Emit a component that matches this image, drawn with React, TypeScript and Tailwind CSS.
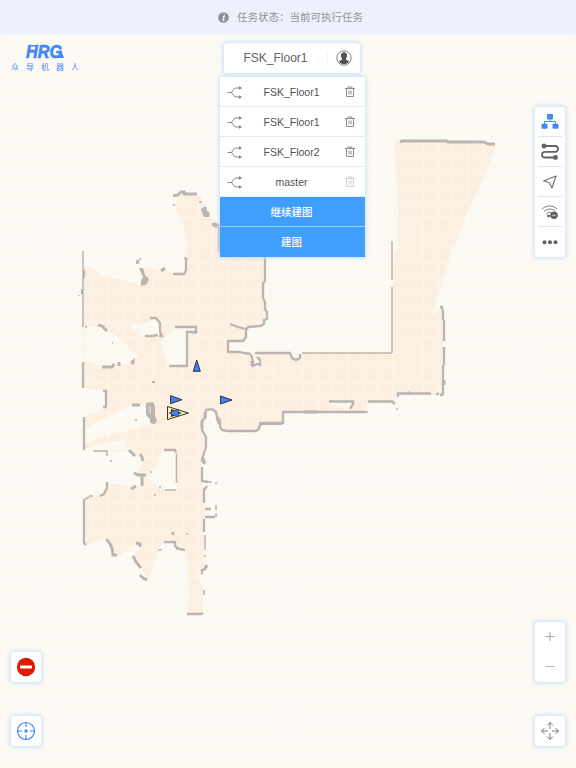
import React from "react";

const sans = "font-['Liberation_Sans','Noto_Sans_CJK_SC',sans-serif]";
const card = "rounded-[3px] bg-white shadow-[0_0_4px_1px_#c3dff8]";

const FLOOR =
  "M178 196L200 195L204 203L208 214L214 220L219 226V250H265V284L264 298L267 312L264 322L262 326L247 327L246 338L242 341H228V352L240 353L252 354L290 353L293 358H299L302 353H392V282L394 253L398 250V200L396 175L394 142L450 143L496 145L486 172L463 223L450 255L438 295L431 317L441 308H443V395H398L395 401H368L363 411L354 412H283V423H262L258 430L225 431L220 427L217 417L212 409L206 410L204 418L202 425L203 433L206 438L205 455L202 460L201 481L204 487L203 503L205 508V518L204 533V550L205 566L199 577L203 590V613H187L189 597L188 563L185 550L177 547L175 542H164L158 551L148 580L142 568L133 557L140 547L137 543L118 557L112 545L106 538L113 534L86 545L84 498L102 495L107 482L133 488L142 485V475L137 472L142 463L132 450L120 452L107 450H85V416L106 408L104 391L84 388V267H90L102 276L108 276L140 285L142 268L150 267L160 272L166 268L173 274L185 273L187 243L182 223L175 205Z";

const VOIDS = [
  "M85 327L92 327L100 324L108 330L128 346L139 357L132 363L122 364L113 367H103L85 361Z",
  "M132 325L137 324L142 325L148 321L158 318L162 330L160 336L145 336L136 335L139 331L131 330Z",
  "M165 338L175 328L197 325V332L187 334V367H169L165 355L160 342Z",
  "M87 427L106 418L127 407L145 405L147 413L155 423L130 430L106 436L87 442L84 442Z",
  "M86 449L108 442L126 440L126 446L132 450H86Z",
  "M163 450H176L177 490H165L152 483L148 477L155 467Z",
  "M328 403H352V410H347L338 407Z",
  "M251 357L258 357L260 364L255 366Z M263 363L265 368L266 373L264 369Z",
  "M103 391L106 399L105 408L97 411L84 416V388Z",
];

// Wall traces grouped by scan thickness
const THICK =
  "M83 362V388M84 417V450M84 499V543L86 545M84 270V278M82 289V294M173 274H184L186 270V258L187 260M212 224H216L219 226V250L218 251M265 257V281L263 283V298L265 302V309L267 312V319L264 320V324L261 326L248 327L246 330V337L243 341H228V352L240 352L244 353L251 354M230 324L238 327L246 329M255 353H290L292 358L296 360L300 358V354M251 355L253 361V366L257 364L260 365V360L257 357M283 412H366M283 411V423H262L259 427V429L256 431H227L222 430L220 427V420L217 417L216 412L212 409L206 410L205 418L202 421V430L206 437V447L204 453L202 461L205 464M202 467V481L208 482M207 486L204 490V503M204 519V532M205 509H211M205 517H215M329 401.500H353V404L350 409M368 401.500H392L395 404M398 397V393.500H431M436 394H439M443 395H440M440 307H442L443 312V320M444 320V341M444 347V365M443 365V395M150 318H156L160 323V332L162 336H159M145 336H152L158 335M175 327H196V332H187V366H169M103 391H106V407H103M164 450H175L176 453M107 482V488L104 494L100 496M164 542H175V546L179 549L185 550M187 614H201L203 613";
const CLUMPS =
  "M173 196L178 195L181 192H184V194H197M400 142L402 141H447L448 142H484L488 144H495M129 450L135 456M140 454L142 457L143 461M134 473L138 475H146M142 475V486M131 489L136 486M106.500 539L110 544L112 548L113 555H117M136 543L140 544V547M133 556L136 562L141 568M140 575L143 578L147 580M98 325L102 326L107 331M102 367H112L114 364M132 405H140M154 422H156M259 423.500H282M205 412V418M217 417L219 424M252 361V366M202 421V428M202 457L205 463M207 565L205 569L201 571M201 573H203M173 532V535M212 224L217 227M203 208L205 211M137 264L138 260M161 271L165 268M119 362V366M131 362L134 363M408 393H410M444 380V385M304 412H318";
const THIN =
  "M83 251V327M392 241V280M392 287V353M302 353H392M93 451H107V456M176.500 454V483M165 490H176M216 505V510M216 513V517M205 535V550M204 590V595M205 555V557M208 482H212M216 482V484M85 499L89 497M89 496H93M176 549H178M158 550H162M187 533V535M345 412H368M85 327H87M79 295V296M173 205H175M199 202H202M396 409H398M110 461H112M150 472H152M154 495H156M159 487H161M112 343H113M135 420H137M152 382H155M185 257V259M140 258V260";
const BLOBS =
  "M139 268L143 268L145 275L149 279L147 284L141 286L141 281L143 277Z M146 403L153 402L155 406V416L157 421L154 424L150 423V419L146 415Z M201 209L206 206L207 211L210 213L209 217H204Z M151 383L155 380V383Z M131 361L135 358L134 365Z M188 332L198 331L196 334Z";

const Grid = () => (
  <>
    {Array.from({ length: 39 }, (_, i) => (
      <path key={`v${i}`} d={`M${3 + i * 15} 0V768`} />
    ))}
    {Array.from({ length: 50 }, (_, i) => (
      <path key={`h${i}`} d={`M0 ${22.5 + i * 15}H576`} />
    ))}
  </>
);

function FloorMap() {
  return (
    <svg className="absolute inset-0" width="576" height="768" viewBox="0 0 576 768">
      <rect width="576" height="768" fill="#fcf9f2" />
      <g fill="none" stroke="#fff" strokeWidth="2" opacity=".3"><Grid /></g>
      <path d={FLOOR} fill="#fcefdf" />
      {VOIDS.map((d) => <path key={d} d={d} fill="#fcf9f2" />)}
      <g fill="none" stroke="#fff" strokeWidth="1.8" opacity=".3"><Grid /></g>
      <g fill="none" stroke="#bbb4b0">
        <path d={THICK} strokeWidth="2.3" />
        <path d={CLUMPS} strokeWidth="2.9" />
        <path d={THIN} strokeWidth="1.5" />
        <path d={BLOBS} fill="#bbb4b0" stroke="none" />
      </g>
      <path d="M149 406v7l2 1v-8z" fill="#d8cec5" />
      <g fill="#427ff0" stroke="#30333b" strokeWidth="1">
        <path d="M196.700 360L200.300 371.300H193.300Z" />
        <path d="M170.500 395.700L182 399.700L170.500 403.700Z" />
        <path d="M220.500 396L232 400L220.500 404Z" />
        <path d="M167.500 406.500L188.500 413L167.500 419.500Z" fill="#fff3a6" />
        <path d="M171 409L182 413L171 417Z" fill="#30333b" stroke="none" />
        <path d="M169 413L174 410.500L178.500 409.500V416.500L174 415.500Z" strokeWidth=".6" />
      </g>
    </svg>
  );
}

function Branch() {
  return (
    <svg width="16" height="14" viewBox="0 0 16 14" fill="none" stroke="#85878a" strokeWidth="1">
      <path d="M.5 7.500H4C6 7.500 6 3 9 3H13M4 7.500C6 7.500 6 12 9 12H13" />
      <path d="M12 1.300L15 3L12 4.700ZM12 10.300L15 12L12 13.700Z" fill="#77797d" stroke="none" />
    </svg>
  );
}

function Trash({ muted = false }: { muted?: boolean }) {
  return (
    <svg className="mt-px" width="10" height="12" viewBox="0 0 10 12" fill="none" stroke={muted ? "#cfd0d4" : "#8b8d91"} strokeWidth="1">
      <path d="M0 2.500H10M3 2.500V1H7V2.500M1.500 2.500V10.500H8.500V2.500M4 4.500V8.500M6 4.500V8.500" />
    </svg>
  );
}

const maps = ["FSK_Floor1", "FSK_Floor1", "FSK_Floor2", "master"];

function MapPicker() {
  return (
    <div className="flex w-[145px] flex-col">
      <div className={`${card} ml-1 flex h-[30px] w-[136px] items-center`}>
        <span className="w-[103px] text-center text-[12px] leading-[30px] text-[#606266]">FSK_Floor1</span>
        <div className="flex h-[14px] flex-1 items-center justify-center border-l border-[#f2f3f6] pr-px">
          <svg width="16" height="16" viewBox="0 0 16 16">
            <circle cx="8" cy="8" r="7.200" fill="#fff" stroke="#85878a" />
            <path d="M8 2.200C5.500 2.200 4.800 4 5 6C5.200 8 6 8.500 6.200 9.500L3 11.300C4 13.500 6 14.300 8 14.300S12 13.500 13 11.300L9.800 9.500C10 8.500 10.800 8 11 6C11.200 4 10.500 2.200 8 2.200Z" fill="#505256" />
          </svg>
        </div>
      </div>
      <div className="mt-1 w-full bg-white text-[10.5px] leading-[30px] text-[#505256] shadow-[0_0_4px_1px_#c3dff8]">
        {maps.map((name, i) => (
          <div key={i} className="flex h-[30px] items-center border-b border-[#e9ebef] pl-[7px] pr-[10px]">
            <Branch />
            <span className="flex-1 pr-[5px] pt-px text-center">{name}</span>
            <Trash muted={name === "master"} />
          </div>
        ))}
        <div className="h-[30px] border-b border-[#9bccff] bg-[#409eff] pr-[2px] text-center font-medium text-white">继续建图</div>
        <div className="h-[30px] bg-[#409eff] pr-[2px] text-center font-medium text-white">建图</div>
      </div>
    </div>
  );
}

function Brand() {
  return (
    <div className="w-[68px] text-[#4288f5]">
      <svg className="-mt-[4px] block" width="68" height="24" viewBox="0 -4 68 24" fill="currentColor">
        <text x="15" y="14" fontFamily="Liberation Sans" fontStyle="italic" fontWeight="700" fontSize="18" textLength="36" lengthAdjust="spacingAndGlyphs" stroke="currentColor" strokeWidth=".6">HRG</text>
        <path d="M18 1H27L26.500 2.500H17.500ZM49.500 4L53 14H43V12.300H50Z" />
      </svg>
      <div className="-mt-px flex justify-between text-[8px] leading-[10px]">
        {["众", "导", "机", "器", "人"].map((c) => <span key={c}>{c}</span>)}
      </div>
    </div>
  );
}

const toolIcons = [
  <svg key="tree" width="18" height="16" viewBox="0 0 18 16" fill="#4288f5">
    <rect x="6" y="0" width="6" height="5.500" rx="1" /><rect x=".5" y="9.800" width="6" height="5" rx="1" /><rect x="11.500" y="9.800" width="6" height="5" rx="1" />
    <path d="M9 5V7.500M3.500 10.500V7.500H14.500V10.500" fill="none" stroke="#4288f5" />
  </svg>,
  <svg key="route" width="18" height="18" viewBox="0 0 18 18" fill="none" stroke="#616367" strokeWidth="1.800">
    <path d="M3 3H14C18 3 18 8.800 14 8.800H4C0 8.800 0 14.500 4 14.500H14" />
    <circle cx="3" cy="3" r="2.400" fill="#616367" stroke="none" /><circle cx="14.500" cy="14.500" r="2.400" fill="#616367" stroke="none" />
  </svg>,
  <svg key="nav" width="16" height="16" viewBox="0 0 16 16" fill="none" stroke="#737579" strokeWidth="1.200" strokeLinejoin="round">
    <path d="M14 2L10 14L7.200 8.500L1.500 7Z" />
  </svg>,
  <svg key="signal" width="18" height="16" viewBox="0 0 18 16" fill="none" stroke="#77797d">
    <path d="M1 5C5 1 12 1 16 5M3 7.500C7 4.500 10.500 4.500 14 6.500M5 10C7 8 8.500 8 10 8.500" />
    <circle cx="13" cy="11.300" r="3.800" fill="#5e6064" stroke="none" /><circle cx="7.500" cy="12" r="1.400" fill="#5e6064" stroke="none" />
    <path d="M8 12H10.500" /><path d="M11.300 11.300H14.700" stroke="#ddd" strokeWidth="1" />
  </svg>,
  <svg key="more" width="16" height="6" viewBox="0 0 16 6" fill="#606266">
    <circle cx="2.500" cy="3.300" r="2" /><circle cx="8" cy="3.300" r="2" /><circle cx="13.500" cy="3.300" r="2" />
  </svg>,
];

export default function App() {
  return (
    <div className={`${sans} relative flex h-[768px] w-[576px] flex-col overflow-hidden`}>
      <FloorMap />
      <header className="relative flex h-[34px] items-center justify-center gap-[8px] rounded-b-[3px] bg-[#edf1fc] pl-[5px] text-[10.5px] text-[#909399]">
        <svg width="11" height="11" viewBox="0 0 11 11">
          <circle cx="5.500" cy="5.500" r="5.300" fill="#8f9196" />
          <path d="M6.500 2.300L6.200 3.500M5 4.700H6L5.200 8.300H6.500" fill="none" stroke="#fff" strokeWidth="1.200" />
        </svg>
        <span className="pt-[2px]">任务状态：当前可执行任务</span>
      </header>
      <main className="relative grid flex-1 grid-cols-[208px_146px_1fr] px-[11px]">
        <div className="flex w-[68px] flex-col pb-[22px] pt-[10px]">
          <Brand />
          <div className="mt-auto flex flex-col gap-[34px]">
            <button className={`${card} flex size-[30px] items-center justify-center`}>
              <svg width="20" height="20" viewBox="0 0 20 20">
                <circle cx="10" cy="10" r="9.200" fill="#d81e06" /><rect x="4" y="8.500" width="12" height="3" rx=".8" fill="#fff" />
              </svg>
            </button>
            <button className={`${card} flex size-[30px] items-center justify-center`}>
              <svg width="20" height="20" viewBox="0 0 20 20" fill="none" stroke="#4288f5" strokeWidth="1.200">
                <circle cx="10" cy="10" r="8.500" /><path d="M10 1V6M10 14V19M1 10H6M14 10H19" /><circle cx="10" cy="10" r="1.700" fill="#4288f5" stroke="none" />
              </svg>
            </button>
          </div>
        </div>
        <div className="pl-px pt-[9px]"><MapPicker /></div>
        <div className="flex flex-col items-end pb-[22px] pt-[73px]">
          <div className={`${card} flex w-[30px] flex-col items-center`}>
            {toolIcons.map((icon, i) => (
              <div key={i} className="flex h-[30px] w-[24px] items-center justify-center border-b border-[#e2e4e8] last:border-transparent">{icon}</div>
            ))}
          </div>
          <div className={`${card} mt-auto flex w-[30px] flex-col items-center`}>
            <div className="flex size-[30px] items-center justify-center">
              <svg width="10" height="10" viewBox="0 0 10 10" stroke="#a0a1a4" strokeWidth="1"><path d="M.5 4.500H9.500M5 0V9" /></svg>
            </div>
            <div className="flex size-[30px] items-center justify-center">
              <svg width="10" height="10" viewBox="0 0 10 10" stroke="#b0b1b4" strokeWidth="1"><path d="M.5 4.500H9.500" /></svg>
            </div>
          </div>
          <button className={`${card} mt-[34px] flex size-[30px] items-center justify-center`}>
            <svg width="20" height="20" viewBox="0 0 20 20" fill="none" stroke="#77797d" strokeWidth="1">
              <path d="M10 8V1.500M10 12V18.500M8 10H1.500M12 10H18.500M7 4.500L10 1.500L13 4.500M7 15.500L10 18.500L13 15.500M4.500 7L1.500 10L4.500 13M15.500 7L18.500 10L15.500 13" />
            </svg>
          </button>
        </div>
      </main>
    </div>
  );
}
